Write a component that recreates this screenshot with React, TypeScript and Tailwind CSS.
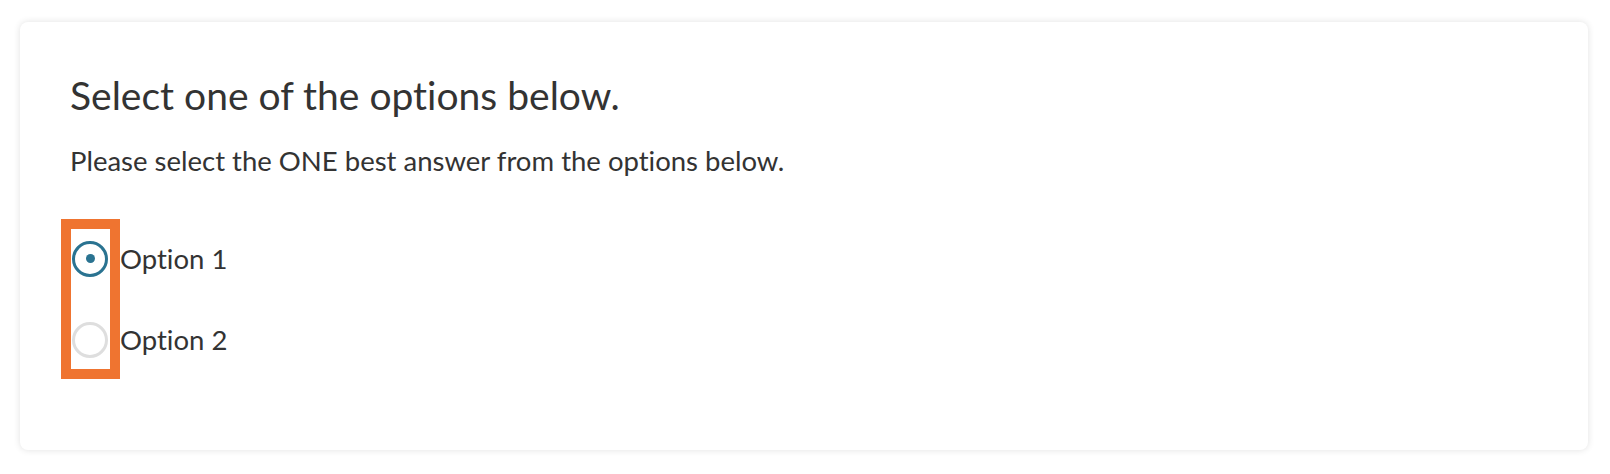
import React from 'react';

const options = ['Option 1', 'Option 2'];

export default function App() {
  const selected = 0;

  return (
    <div className="w-[1610px] h-[474px] bg-white pt-[22px] pl-5 font-['Lato','Liberation_Sans',sans-serif] text-[#333] [font-variant-ligatures:none]">
      <div className="w-[1568px] h-[428px] rounded-lg bg-white shadow-[0_0_7px_rgba(0,0,0,0.12)] pl-[50px] pt-[50px]">
        <h1 className="text-[39px] leading-[1.2] text-[#333]">Select one of the options below.</h1>
        <p className="mt-[25px] text-[27.5px] leading-[1.2] text-[#333]">
          Please select the ONE best answer from the options below.
        </p>

        <div className="relative mt-[64px] flex flex-col gap-[45px]">
          {/* highlight frame around the radio buttons */}
          <div className="absolute -left-[9px] -top-[22px] w-[59px] h-[160px] border-[10px] border-[#ef7430] pointer-events-none" />
          {options.map((label, i) => (
            <label key={label} className="relative flex items-center gap-3 cursor-pointer">
              <span
                className={`ml-[2px] flex h-9 w-9 items-center justify-center rounded-full border-[3.5px] bg-white ${
                  i === selected ? 'border-[#2a7391]' : 'border-[#dedede]'
                }`}
              >
                {i === selected && <span className="h-[9px] w-[9px] rounded-full bg-[#2a7391]" />}
              </span>
              <span className="text-[27.5px] leading-none">{label}</span>
            </label>
          ))}
        </div>
      </div>
    </div>
  );
}
